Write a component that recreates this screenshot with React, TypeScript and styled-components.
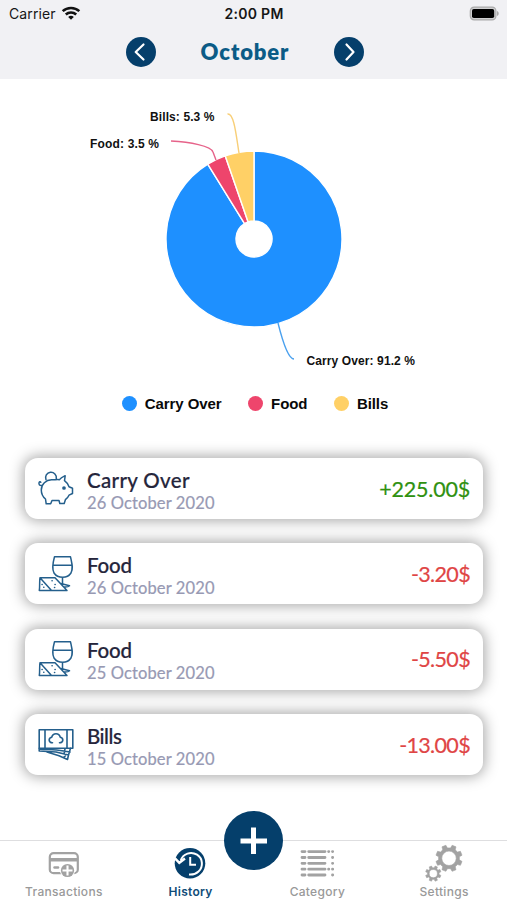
import React from "react";
import styled, { createGlobalStyle } from "styled-components";

const NAVY = "#053f6b";
const LINE = "#245f8c";
const GREY = "#a2a2a2";

const GlobalStyle = createGlobalStyle`
  * { box-sizing: border-box; }
  body { margin: 0; background: #fff; }
  svg { display: block; overflow: visible; }
`;

const Screen = styled.div`
  width: 507px;
  height: 900px;
  display: flex;
  flex-direction: column;
  background: #fff;
  overflow: hidden;
`;

const Header = styled.header`
  height: 79px;
  flex: none;
  background: #f1f1f4;
`;

const StatusBar = styled.div`
  height: 27px;
  padding: 0 8px 0 9px;
  display: grid;
  grid-template-columns: 1fr auto 1fr;
  align-items: center;
  font-family: Inter, sans-serif;
  font-size: 14px;
  color: #161616;
`;

const Carrier = styled.div`
  display: flex;
  align-items: center;
  gap: 6px;
  letter-spacing: 0.1px;
`;

const Clock = styled.div`
  font-weight: 600;
  font-size: 14px;
  letter-spacing: 0.3px;
`;

const Battery = styled.div`
  justify-self: end;
`;

const MonthBar = styled.div`
  height: 50px;
  display: flex;
  align-items: center;
  justify-content: center;
  padding-right: 17px;
`;

const Month = styled.h1`
  margin: 0;
  width: 178px;
  text-align: center;
  font: 800 22px/30px Lato, sans-serif;
  letter-spacing: 0.9px;
  color: #0b5b86;
`;

const RoundButton = styled.button`
  width: 30px;
  height: 30px;
  padding: 0;
  border: 0;
  border-radius: 50%;
  background: ${NAVY};
`;

const ChartSection = styled.section`
  height: 379px;
  flex: none;
`;

const ChartLabel = styled.text`
  font: 700 12px "Liberation Sans", sans-serif;
  fill: #111;
`;

const Legend = styled.div`
  display: flex;
  justify-content: center;
  gap: 26.5px;
  height: 20px;
  margin-top: 5px;
  padding-left: 3px;
`;

const LegendItem = styled.div`
  display: flex;
  align-items: center;
  gap: 8px;
  font: 700 15px/20px "Liberation Sans", sans-serif;
  letter-spacing: -0.08px;
  color: #090909;
`;

const Dot = styled.i<{ $color: string }>`
  width: 15px;
  height: 15px;
  margin-bottom: 2px;
  border-radius: 50%;
  background: ${(p) => p.$color};
`;

const List = styled.main`
  flex: 1;
  display: flex;
  flex-direction: column;
  gap: 24.4px;
  padding: 0 24px 0 25px;
`;

const Card = styled.article`
  height: 61px;
  flex: none;
  display: flex;
  align-items: center;
  padding: 0 13px;
  border-radius: 13px;
  background: #fff;
  box-shadow: 0 0 14px 2px rgba(0, 0, 0, 0.34);
`;

const CardText = styled.div`
  flex: 1;
  margin-left: 13px;
  padding-top: 6px;
  font-family: Lato, sans-serif;
`;

const Name = styled.div<{ $spacing: number }>`
  font-size: 20.5px;
  line-height: 23px;
  font-weight: 500;
  letter-spacing: ${(p) => p.$spacing}px;
  color: #25253b;
  -webkit-text-stroke: 0.2px #25253b;
`;

const DateText = styled.div`
  font-size: 16.5px;
  line-height: 23px;
  letter-spacing: 0.13px;
  color: #9799b3;
  -webkit-text-stroke: 0.2px #9799b3;
`;

const Amount = styled.div<{ $income: boolean }>`
  font: 400 21.5px/28px Lato, sans-serif;
  letter-spacing: ${(p) => (p.$income ? -0.2 : -0.65)}px;
  color: ${(p) => (p.$income ? "#2f9110" : "#df4545")};
  -webkit-text-stroke: 0.2px currentColor;
`;

const TabBar = styled.nav`
  position: relative;
  height: 60px;
  flex: none;
  display: grid;
  grid-template-columns: repeat(4, 1fr);
  border-top: 1px solid #dedee0;
  background: #fff;
`;

const Tab = styled.div<{ $active?: boolean }>`
  display: flex;
  flex-direction: column;
  align-items: center;
  justify-content: space-between;
  padding: 3px 0 0 1px;
  font: ${(p) => (p.$active ? 600 : 500)} 12px/17px Inter, sans-serif;
  letter-spacing: 0.3px;
  color: ${(p) => (p.$active ? "#104c78" : "#999")};
`;

const AddButton = styled.button`
  position: absolute;
  left: 224px;
  top: -30px;
  width: 59px;
  height: 59px;
  padding: 0;
  border: 0;
  border-radius: 50%;
  background: ${NAVY};
`;

const SLICES = [
  { name: "Carry Over", color: "#1e90ff", start: 0, end: 328.3 },
  { name: "Food", color: "#ee456c", start: 328.3, end: 340.9 },
  { name: "Bills", color: "#ffd066", start: 340.9, end: 360 },
];

function slicePath(start: number, end: number) {
  const at = (r: number, deg: number) => {
    const a = (deg * Math.PI) / 180;
    return `${254 + r * Math.sin(a)} ${160 - r * Math.cos(a)}`;
  };
  const large = end - start > 180 ? 1 : 0;
  return `M${at(18, start)}L${at(88, start)}A88 88 0 ${large} 1 ${at(88, end)}L${at(18, end)}A18 18 0 ${large} 0 ${at(18, start)}Z`;
}

function PieChart() {
  return (
    <svg width="507" height="310" viewBox="0 0 507 310">
      {SLICES.map((s) => (
        <path key={s.name} d={slicePath(s.start, s.end)} fill={s.color} stroke="#fff" strokeWidth="1.4" />
      ))}
      <g fill="none" strokeWidth="1.4">
        <path d="M171 62C190 63 211 67 213 73L216 81" stroke="#e6638a" />
        <path d="M227.500 35C234 34 236 55 239 74" stroke="#f8cf78" />
        <path d="M278 244C282 260 288 280 294 280" stroke="#4aa0ee" />
      </g>
      <ChartLabel x="150" y="42" textLength="64.500">Bills: 5.3 %</ChartLabel>
      <ChartLabel x="90" y="68.500" textLength="69">Food: 3.5 %</ChartLabel>
      <ChartLabel x="306.500" y="286" textLength="108.500">Carry Over: 91.2 %</ChartLabel>
    </svg>
  );
}

function WifiIcon() {
  return (
    <svg width="18" height="14" viewBox="0 0 18 14" fill="none" stroke="#111" strokeWidth="2.500">
      <path d="M.7 4.200C5.200-.2 12.800-.2 17.300 4.200" />
      <path d="M3.800 7.500C6.700 4.700 11.300 4.700 14.200 7.500" />
      <path d="M9 12.700 6.200 9.900C7.700 8.500 10.300 8.500 11.800 9.900Z" fill="#111" stroke="none" />
    </svg>
  );
}

function BatteryIcon() {
  return (
    <svg width="30" height="14" viewBox="0 0 30 14">
      <rect x="1.300" y=".1" width="25.600" height="12.800" rx="3.800" fill="#d0d0d2" stroke="#aaa" strokeWidth="1.200" />
      <rect x="3" y="2" width="22.200" height="9" rx="1.800" fill="#000" />
      <path d="M28 4.100C30.300 5.100 30.300 8.100 28 9.100Z" fill="#aaa" />
    </svg>
  );
}

function Chevron({ right }: { right?: boolean }) {
  return (
    <svg width="30" height="30" viewBox="0 0 30 30" fill="none" stroke="#fff" strokeWidth="2.200" strokeLinecap="round" strokeLinejoin="round">
      <path d={right ? "M12.500 7.500 19.500 15 12.500 22.500" : "M17.500 7.500 9.700 15 17.500 22.500"} />
    </svg>
  );
}

const lineIcon = {
  width: 36,
  height: 36,
  viewBox: "0 0 36 36",
  fill: "none",
  stroke: LINE,
  strokeWidth: 1.5,
  strokeLinecap: "round" as const,
  strokeLinejoin: "round" as const,
};

function PiggyIcon() {
  return (
    <svg {...lineIcon}>
      <path d="M13.500 8.800C17 8.800 19.500 8.200 21.500 8.700C23 6.500 25.500 5.500 27.200 4.700L26.500 9.700C29 11.500 30.300 13.800 31 15.800L34.500 17.200V22.500L31 24.200C30 26.500 28.500 27.800 27.400 28.700L26.200 32.500H21.800L21 29.500H14L12.700 32.800H8.200L7.500 28C4.500 25.500 3.300 22.500 3.300 19C3.300 13 8 9 13.500 8.800Z" />
      <path d="M8 8.800A5.400 5.400 0 1 1 18.300 7.600M3.800 14.500C1.400 14.700.6 13.200 1.100 11.500C1.500 10.500 2.400 10.500 2.800 11.300" />
      <circle cx="26" cy="17" r="1.100" fill={LINE} />
    </svg>
  );
}

function FoodIcon() {
  return (
    <svg {...lineIcon}>
      <path d="M16.500 .8H32.500C34 8 35.500 12.500 33 17C31 20 28.500 21.300 24.700 21.300C20.700 21.300 18 20 16 17C13.500 12.500 14.800 7 16.500 .8ZM14.800 9.300H34.200M24.500 21.300V28" />
      <path d="M2 21.700H17L29 34.500H1.300C2 30 1.300 26 2 21.700ZM2 21.700 13.500 34.500M22.800 27.500 31.500 29.700C30 31.200 28 31 25.500 30.800" />
      <path d="M14 24.700H14.200M17 28.500H17.200M16.500 31.500H16.700M4 28.500H4.200M5.700 31.300H5.900" />
    </svg>
  );
}

function BillsIcon() {
  return (
    <svg {...lineIcon} strokeWidth={1.6}>
      <path d="M1.200 2.800H34.800V21.300H1.200ZM7 2.800V21.300M29 2.800V21.300M14.500 15.700C10.500 15.700 10 11.200 13.700 10.200C15 5.500 21 5.500 22.300 10.200C26 11.200 25.500 15.700 21.500 15.700" />
      <path d="M1.200 21.300V24L18 25 30.500 28 32.500 21.300M1.500 22.200C12 22.400 20 22.500 32 25M9 25L21 28.800 29.500 32.500 30.500 28M27 21.800 26 27M27.300 29 25.500 30.500" />
    </svg>
  );
}

function TransactionsIcon() {
  return (
    <svg width="31" height="34" viewBox="0 0 31 34">
      <rect x="1.800" y="9.200" width="28" height="20" rx="3.800" fill="none" stroke={GREY} strokeWidth="2.200" />
      <path d="M1.500 14H30V17.500H1.500Z" fill={GREY} />
      <path d="M6.500 23.500H10" stroke={GREY} strokeWidth="2.500" strokeLinecap="round" />
      <circle cx="19.500" cy="26.500" r="7.600" fill="#fff" />
      <circle cx="19.500" cy="26.500" r="6.600" fill={GREY} />
      <path d="M19.500 21.500V31.500M14.500 26.500H24.500" stroke="#fff" strokeWidth="2.100" />
    </svg>
  );
}

function HistoryIcon() {
  return (
    <svg width="31" height="34" viewBox="0 0 31 34" fill="none">
      <circle cx="15" cy="19.300" r="15.300" fill={NAVY} />
      <path d="M5.800 16.500C8 9.500 16 7 22 10.700C28 14.500 28.500 23 23.500 27.500C20.700 30.200 17.500 30.800 14 30.500" stroke="#fff" strokeWidth="2" />
      <path d="M0 14.300 4.300 18.800 10 14.500" stroke="#fff" strokeWidth="2.400" />
      <path d="M15.200 13V20.700H21" stroke="#fff" strokeWidth="2" />
    </svg>
  );
}

function CategoryIcon() {
  return (
    <svg width="34" height="34" viewBox="0 0 34 34" stroke={GREY} strokeWidth="2.800" strokeLinecap="round">
      {[7.6, 13.5, 19.3, 25.2, 31].map((y, i) => (
        <path key={y} d={`M2 ${y}H5M8.700 ${y}H25M32.500 ${y}H32.700${i === 0 || i === 3 ? `M28.600 ${y}H28.800` : ""}`} />
      ))}
    </svg>
  );
}

function gearPath(cx: number, cy: number, outer: number, root: number, hole: number) {
  const points: string[] = [];
  for (let i = 0; i < 8; i++) {
    for (const [r, offset] of [[root, -14], [outer, -9], [outer, 9], [root, 14]]) {
      const a = ((i * 45 + 22.5 + offset) * Math.PI) / 180;
      points.push(`${cx + r * Math.cos(a)} ${cy + r * Math.sin(a)}`);
    }
  }
  return `M${points.join("L")}ZM${cx - hole} ${cy}a${hole} ${hole} 0 1 0 ${hole * 2} 0a${hole} ${hole} 0 1 0 ${-hole * 2} 0Z`;
}

function SettingsIcon() {
  return (
    <svg width="38" height="34" viewBox="0 0 38 34" fill={GREY} fillRule="evenodd" stroke={GREY} strokeWidth=".6" strokeLinejoin="round">
      <path d={gearPath(24, 14.3, 13.4, 10.5, 7.2)} />
      <path d={gearPath(8.3, 29.6, 7.8, 5.8, 4.1)} />
    </svg>
  );
}

const TRANSACTIONS = [
  { name: "Carry Over", date: "26 October 2020", amount: "+225.00$", Icon: PiggyIcon, spacing: 0.35 },
  { name: "Food", date: "26 October 2020", amount: "-3.20$", Icon: FoodIcon, spacing: -0.2 },
  { name: "Food", date: "25 October 2020", amount: "-5.50$", Icon: FoodIcon, spacing: -0.2 },
  { name: "Bills", date: "15 October 2020", amount: "-13.00$", Icon: BillsIcon, spacing: -0.5 },
];

export default function App() {
  return (
    <Screen>
      <GlobalStyle />
      <Header>
        <StatusBar>
          <Carrier>Carrier <WifiIcon /></Carrier>
          <Clock>2:00 PM</Clock>
          <Battery><BatteryIcon /></Battery>
        </StatusBar>
        <MonthBar>
          <RoundButton aria-label="Previous month"><Chevron /></RoundButton>
          <Month>October</Month>
          <RoundButton aria-label="Next month"><Chevron right /></RoundButton>
        </MonthBar>
      </Header>
      <ChartSection>
        <PieChart />
        <Legend>
          {SLICES.map((s) => (
            <LegendItem key={s.name}><Dot $color={s.color} />{s.name}</LegendItem>
          ))}
        </Legend>
      </ChartSection>
      <List>
        {TRANSACTIONS.map(({ name, date, amount, Icon, spacing }) => (
          <Card key={name + date}>
            <Icon />
            <CardText>
              <Name $spacing={spacing}>{name}</Name>
              <DateText>{date}</DateText>
            </CardText>
            <Amount $income={amount.startsWith("+")}>{amount}</Amount>
          </Card>
        ))}
      </List>
      <TabBar>
        <Tab><TransactionsIcon />Transactions</Tab>
        <Tab $active><HistoryIcon />History</Tab>
        <Tab><CategoryIcon />Category</Tab>
        <Tab><SettingsIcon />Settings</Tab>
        <AddButton aria-label="Add transaction">
          <svg width="59" height="59" viewBox="0 0 59 59" stroke="#fff" strokeWidth="5">
            <path d="M29.500 16.500V43M16.500 30H43" />
          </svg>
        </AddButton>
      </TabBar>
    </Screen>
  );
}
